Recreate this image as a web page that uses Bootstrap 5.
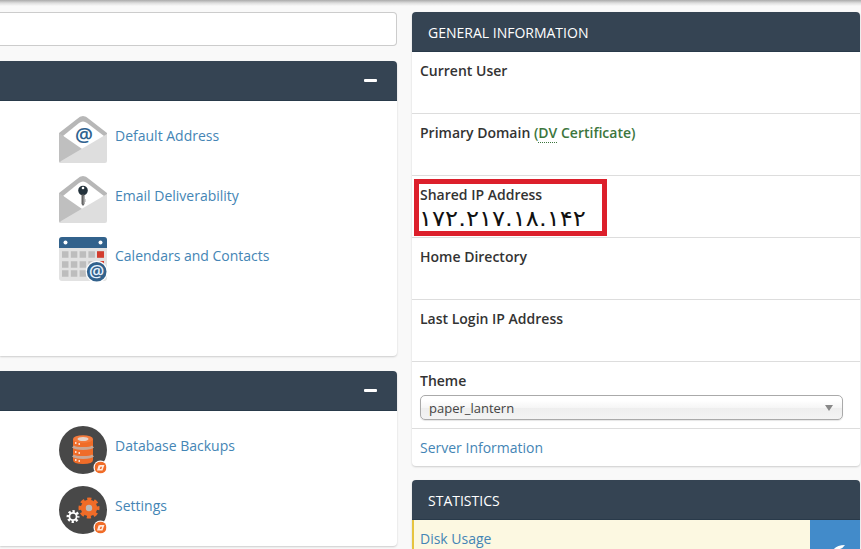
<!DOCTYPE html>
<html lang="en">
<head>
<meta charset="utf-8">
<meta name="viewport" content="width=device-width, initial-scale=1">
<title>cPanel</title>
<link rel="stylesheet" href="https://cdn.jsdelivr.net/npm/bootstrap@5.3.0/dist/css/bootstrap.min.css">
<style>
body{font-family:"Open Sans",sans-serif;font-size:14px;line-height:20px;color:#333;background:#f9f9f9;height:549px}
a{color:#4485b5;text-decoration:none}
.page{height:549px;padding-top:12px;gap:15px;background:linear-gradient(#aaa,#ddd 3px,#f9f9f9 6px)}
.main-col{width:397px}
.side-col{width:448px}
.search-box{height:34px;border:1px solid #ccc;border-left:0;border-radius:0 4px 4px 0;box-shadow:none!important}
.panel{background:#fff;border-radius:4px;box-shadow:0 1px 2px rgba(0,0,0,.18)}
.main-col .panel{border-radius:0 4px 4px 0}
.panel-title{height:40px;padding:2px 16px 0;background:#354453;color:#fff;border-radius:4px 4px 0 0;border-bottom:1px solid #293a4a}
.main-col .panel-title{border-radius:0 4px 0 0;padding:0 20px 0 0}
.minus{width:13px;height:3px;background:#fff;border-radius:1px}
.tools{padding:15px 0 0 59px;gap:12px}
.tools span{padding-top:10px}
.panel-email{height:295px;margin:15px 0}
.panel-backup{height:175px}
.info-row{height:62px;padding:9px 8px;border-bottom:1px solid #ddd;font-weight:600}
.theme-row{height:67px}
.server-row{height:37px;padding:9px 8px}
.ssl{color:#3c763d}
.ssl abbr{text-decoration:none;cursor:help;border-bottom:1px dotted #3c763d;display:inline-block;line-height:18px}
.marked{left:2px;top:3px;width:193px;height:57px;border:5px solid #dc1f2b}
.ip{font-family:"DejaVu Sans",sans-serif;font-weight:400;font-size:22px;line-height:28px;color:#111;white-space:nowrap;margin-left:-1px;transform:scaleX(1.105);transform-origin:0 0}
.theme-pick{width:423px;height:25px;margin-top:4px;padding:0 9px 0 8px;border:1px solid #aaa;border-radius:5px;font-weight:400;font-size:13px;color:#444;background:linear-gradient(#fff 20%,#f6f6f6 50%,#eee 52%,#f4f4f4);box-shadow:0 1px 1px rgba(0,0,0,.1)}
.usage{height:29px;background:#fcf8e1;border-left:2px solid #e6c440}
.usage a{padding:9px 6px}
.usage-icon{width:50px;background:#428bca}
.stats{margin-top:14px}
</style>
<script src="https://cdn.jsdelivr.net/npm/bootstrap@5.3.0/dist/js/bootstrap.bundle.min.js"></script>
</head>
<body class="overflow-hidden">
<svg class="d-none" aria-hidden="true">
  <symbol id="envelope" viewBox="0 0 48 48">
    <path d="M0 17 18 3Q24-3 30 3L48 17V27H0Z" fill="#b7b7b7"/>
    <path d="M4 20 20 7Q24 4 28 7L45 20 24 37Z" fill="#fff"/>
    <path d="M0 17 26 35 12 47H2Q0 47 0 45Z" fill="#bfbfbf"/>
    <path d="M48 18V45Q48 47 46 47H1Q0 47 2 45Z" fill="#dedede"/>
  </symbol>
  <symbol id="restore" viewBox="0 0 12 12">
    <circle cx="6" cy="6" r="6" fill="#f06c28"/>
    <path d="M2.500 9 4 4 6 3.500H10L9 6 8 9H4.500ZM5.200 7.500H6.800L7.600 5.200H6Z" fill="#ffe9dd" fill-rule="evenodd"/>
  </symbol>
</svg>
<div class="page d-flex">
  <main class="main-col flex-shrink-0">
    <input class="form-control search-box" type="text" aria-label="Find functions">
    <section class="panel panel-email">
      <div class="panel-title d-flex align-items-center justify-content-end"><span class="minus"></span></div>
      <div class="tools d-flex flex-column">
        <a class="d-flex gap-2" href="#">
          <svg width="48" height="48"><use href="#envelope"/><text x="25" y="25.500" text-anchor="middle" font-size="20" font-weight="600" fill="#30628f">@</text></svg>
          <span>Default Address</span></a>
        <a class="d-flex gap-2" href="#">
          <svg width="48" height="48"><use href="#envelope"/><circle cx="24" cy="14.500" r="4.800" fill="#24323b"/><circle cx="24" cy="12" r="1.300" fill="#fff"/><path d="M22.500 18.500H25.500V28L24 30 22.500 28Z" fill="#666"/><path d="M25 20V28M26 23V26" stroke="#aaa"/></svg>
          <span>Email Deliverability</span></a>
        <a class="d-flex gap-2" href="#">
          <svg width="48" height="48"><rect y="1" width="48" height="44" rx="3" fill="#e2e2e2"/><path d="M0 12V4Q0 1 3 1H45Q48 1 48 4V12Z" fill="#32628c"/><circle cx="6.500" cy="6.500" r="2" fill="#fff"/><circle cx="41.500" cy="6.500" r="2" fill="#fff"/>
            <path d="M3 18.500H46M3 28.500H46M3 37.500H30" stroke="#bdbdbd" stroke-width="6.500" stroke-dasharray="6.500 2.300"/><path d="M38 15.300H45V21.700H38ZM41 25H45V30H41Z" fill="#d33c2d"/>
            <circle cx="37.700" cy="35.700" r="11" fill="#fff"/><circle cx="37.700" cy="35.700" r="9.800" fill="#32628c"/><text x="37.700" y="41" text-anchor="middle" font-size="17" font-weight="600" fill="#e7f3ff">@</text></svg>
          <span>Calendars and Contacts</span></a>
      </div>
    </section>
    <section class="panel panel-backup">
      <div class="panel-title d-flex align-items-center justify-content-end"><span class="minus"></span></div>
      <div class="tools d-flex flex-column">
        <a class="d-flex gap-2" href="#">
          <svg width="48" height="48"><circle cx="24" cy="24" r="24" fill="#484848"/>
            <path d="M14 13V34Q14 38 24 38T34 34V13Z" fill="#f06c28"/><ellipse cx="24" cy="13" rx="10" ry="3.800" fill="#f47a3c"/><ellipse cx="24" cy="13" rx="5.500" ry="2" fill="#e5d2c8"/>
            <path d="M14 20.500Q16 22.500 24 22.500T34 20.500M14 29.500Q16 31.500 24 31.500T34 29.500" fill="none" stroke="#c9a795" stroke-width="2.800"/><path d="M16 17H17.500M19.500 18H21M16 26H17.500M19.500 27H21M16 34H17.500M19.500 35H21" stroke="#fff" stroke-width="1.300"/>
            <circle cx="41.500" cy="41.500" r="7" fill="#fff"/><use href="#restore" x="35.500" y="35.500" width="12" height="12"/></svg>
          <span>Database Backups</span></a>
        <a class="d-flex gap-2" href="#">
          <svg width="48" height="48"><circle cx="24" cy="24" r="24" fill="#484848"/>
            <circle cx="30" cy="22" r="8.700" fill="none" stroke="#f06c28" stroke-width="3.600" stroke-dasharray="4 2.833" stroke-dashoffset="2"/><circle cx="30" cy="22" r="5.700" fill="#bbb" stroke="#f06c28" stroke-width="5"/>
            <circle cx="14" cy="30.500" r="5.200" fill="none" stroke="#fff" stroke-width="2.500" stroke-dasharray="2.300 1.784" stroke-dashoffset="1.150"/><circle cx="14" cy="30.500" r="3.600" fill="#484848" stroke="#fff" stroke-width="1.800"/>
            <circle cx="41.500" cy="41.500" r="7" fill="#fff"/><use href="#restore" x="35.500" y="35.500" width="12" height="12"/></svg>
          <span>Settings</span></a>
      </div>
    </section>
  </main>
  <aside class="side-col flex-shrink-0">
    <section class="panel">
      <div class="panel-title d-flex align-items-center">GENERAL INFORMATION</div>
      <div class="info-row">Current User</div>
      <div class="info-row">Primary Domain <span class="ssl">(<abbr>DV</abbr> Certificate)</span></div>
      <div class="info-row position-relative">Shared IP Address<div class="ip" dir="ltr">۱۷۲.۲۱۷.۱۸.۱۴۲</div><span class="marked position-absolute"></span></div>
      <div class="info-row">Home Directory</div>
      <div class="info-row">Last Login IP Address</div>
      <div class="info-row theme-row">Theme
        <div class="theme-pick d-flex align-items-center justify-content-between"><span>paper_lantern</span><svg width="8" height="6"><path d="M0 0H8L4 6Z" fill="#888"/></svg></div>
      </div>
      <div class="server-row"><a href="#">Server Information</a></div>
    </section>
    <section class="panel stats">
      <div class="panel-title d-flex align-items-center">STATISTICS</div>
      <div class="usage d-flex justify-content-between overflow-hidden"><a href="#">Disk Usage</a>
        <div class="usage-icon"><svg width="50" height="29"><path d="M22 32Q25 25 35 25Q33 28 30 29Q28 32 28 36Z" fill="#fff"/></svg></div></div>
    </section>
  </aside>
</div>
</body>
</html>
